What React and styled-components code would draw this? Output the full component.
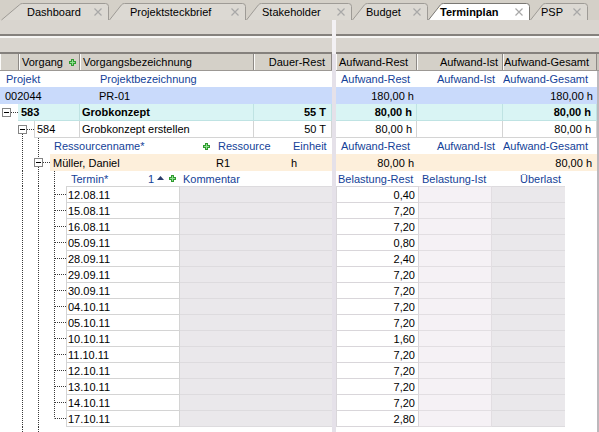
import React from 'react';
import styled, { createGlobalStyle } from 'styled-components';

const FONT = '"Liberation Sans", Arial, sans-serif';
const BLUE = '#143f98';
const C = {
  bar: '#d4d0c8',
  strip: '#d9d5cf',
  blueRow: '#c9dafb',
  cyan: '#d9f4f4',
  cyanLine: '#bfe3e3',
  beige: '#fdefdb',
  grid: '#d4d4d4',
  shade: '#eae8eb',
  shadeLine: '#dddbde',
  pink: '#f5f1f5',
  pinkLine: '#e2dee2',
};

const GlobalStyle = createGlobalStyle`
  html, body { margin: 0; padding: 0; background: #ffffff; }
  body { font-family: ${FONT}; font-size: 11px; color: #000; }
`;

const Screen = styled.div`
  width: 599px;
  height: 432px;
  overflow: hidden;
  display: flex;
  flex-direction: column;
  background: ${C.bar};
  font-family: ${FONT};
  font-size: 11px;
`;

/* ---------- tabs ---------- */
const TabBar = styled.div`
  flex: none;
  height: 20px;
  display: flex;
  align-items: flex-end;
  padding-left: 1px;
  background: ${C.bar};
`;
const Tab = styled.div`
  position: relative;
  flex: none;
  width: ${p => p.$w}px;
  height: 18px;
  box-sizing: border-box;
  display: flex;
  align-items: center;
  padding: 1px 7px 0 ${p => p.$pl}px;
  font-weight: ${p => (p.$active ? 700 : 400)};
  color: #000;
`;
const TabShape = styled.svg`
  position: absolute;
  left: 0;
  top: 0;
  overflow: visible;
`;
const TabLabel = styled.span`
  position: relative;
  white-space: nowrap;
`;
const TabClose = styled.svg`
  position: relative;
  margin-left: auto;
  flex: none;
`;

function TabItem({ label, w, pl, active, slant = 13 }) {
  const d = `M0.5 18 L${slant - 0.5} 2.8 Q${slant + 0.6} 1.5 ${slant + 2.5} 1.5 H${w - 3.5} Q${w - 0.5} 1.5 ${w - 0.5} 4.5 V18`;
  return (
    <Tab $w={w} $pl={pl} $active={active}>
      <TabShape width={w} height={18}>
        <path d={d} fill={active ? '#ffffff' : '#dcd9d3'} stroke={active ? '#7a7874' : '#9e9b96'} />
      </TabShape>
      <TabLabel>{label}</TabLabel>
      <TabClose width="8" height="8" viewBox="0 0 8 8">
        <path d="M0.5 0.5 L7.5 7.5 M7.5 0.5 L0.5 7.5" stroke="#a8a8a8" strokeWidth="1.2" />
      </TabClose>
    </Tab>
  );
}

/* ---------- panes ---------- */
const Workspace = styled.div`
  flex: 1;
  min-height: 0;
  display: flex;
`;
const Pane = styled.div`
  flex: ${p => (p.$w ? `0 0 ${p.$w}px` : '1 1 0')};
  min-width: 0;
  display: flex;
  flex-direction: column;
`;
const Splitter = styled.div`
  flex: 0 0 4px;
  background: linear-gradient(#f3f1f4 0 34px, #e5e1e9 34px);
`;
const ToolStrip = styled.div`
  flex: none;
  height: 14px;
  background: ${C.strip};
  border-bottom: 2px solid #85817d;
  ${p => p.$lower && 'border-top: 2px solid #f7f6f4;'}
`;
const HeadRow = styled.div`
  flex: none;
  display: flex;
  height: 17px;
  box-sizing: border-box;
  border-bottom: 1px solid #9c9894;
  background: ${C.bar};
`;
const HeadCell = styled.div`
  flex: 0 0 ${p => p.$w}px;
  box-sizing: border-box;
  border-left: 1px solid #fbfaf8;
  border-right: 1px solid #8d8985;
  display: flex;
  align-items: center;
  justify-content: ${p => p.$justify || 'flex-start'};
  padding: 0 ${p => p.$pr || 0}px 0 ${p => p.$pl || 0}px;
  white-space: nowrap;
  overflow: hidden;
`;
const HeadFill = styled.div`
  flex: 1;
  background: #c8c4bc;
`;
const Body = styled.div`
  flex: 1;
  min-height: 0;
  display: flex;
  flex-direction: column;
  background: #ffffff;
  overflow: hidden;
  ${p => p.$edge && 'border-right: 2px solid #bcb8bc;'}
`;
const Row = styled.div`
  flex: none;
  display: flex;
  height: ${p => p.$h}px;
  background: ${p => p.$bg || 'transparent'};
`;
const Cell = styled.div`
  ${p => (p.$w ? `flex: 0 0 ${p.$w}px;` : 'flex: 1 1 0;')}
  min-width: 0;
  box-sizing: border-box;
  height: 100%;
  display: flex;
  align-items: center;
  justify-content: ${p => p.$justify || 'flex-start'};
  padding: 0 ${p => p.$pr || 0}px 0 ${p => p.$pl || 0}px;
  background: ${p => p.$bg || 'transparent'};
  color: ${p => (p.$blue ? BLUE : '#000')};
  font-weight: ${p => (p.$bold ? 700 : 400)};
  white-space: nowrap;
  overflow: hidden;
  border-style: solid;
  border-color: ${p => p.$lc || 'transparent'};
  border-width: ${p => `${p.$bt ? 1 : 0}px ${p.$br ? 1 : 0}px ${p.$bb ? 1 : 0}px ${p.$bl ? 1 : 0}px`};
`;
const SortGroup = styled.span`
  display: flex;
  align-items: center;
  color: ${BLUE};
`;
const SortArrow = styled.svg`
  margin: 0 5px 2px 3px;
`;

/* ---------- drawings ---------- */
const PlusIcon = () => (
  <svg width="7" height="7" viewBox="0 0 7 7" style={{ flex: 'none' }}>
    <rect x="2" y="0" width="3" height="7" fill="#2f9a2f" />
    <rect x="0" y="2" width="7" height="3" fill="#2f9a2f" />
    <rect x="3" y="1" width="1" height="5" fill="#8fe08f" />
    <rect x="1" y="3" width="5" height="1" fill="#8fe08f" />
  </svg>
);

const GutterSvg = styled.svg`
  flex: none;
  display: block;
`;
const dot = { stroke: '#3a3a3a', strokeDasharray: '1 1', strokeWidth: 1 };

function Gutter({ w, h, full = [], half = [], box, up, down, branch }) {
  const m = 8.5;
  return (
    <GutterSvg width={w} height={h}>
      {full.map(x => (
        <line key={'f' + x} x1={x + 0.5} y1={0} x2={x + 0.5} y2={h} {...dot} />
      ))}
      {half.map(x => (
        <line key={'h' + x} x1={x + 0.5} y1={0} x2={x + 0.5} y2={m} {...dot} />
      ))}
      {branch && <line x1={branch[0]} y1={m} x2={branch[1] + 1} y2={m} {...dot} />}
      {box !== undefined && up && <line x1={box + 0.5} y1={0} x2={box + 0.5} y2={4} {...dot} />}
      {box !== undefined && down && <line x1={box + 0.5} y1={13} x2={box + 0.5} y2={h} {...dot} />}
      {box !== undefined && (
        <g>
          <rect x={box - 3.5} y={m - 4} width={8} height={8} fill="#fff" stroke="#848484" />
          <line x1={box - 2} y1={m} x2={box + 3} y2={m} stroke="#000" />
        </g>
      )}
    </GutterSvg>
  );
}

/* ---------- data ---------- */
const TABS = [
  { label: 'Dashboard', w: 108, pl: 26, slant: 19 },
  { label: 'Projektsteckbrief', w: 137, pl: 21 },
  { label: 'Stakeholder', w: 106, pl: 16 },
  { label: 'Budget', w: 76, pl: 14 },
  { label: 'Terminplan', w: 102, pl: 12, active: true },
  { label: 'PSP', w: 58, pl: 11 },
];

const DATES = [
  ['12.08.11', '0,40'],
  ['15.08.11', '7,20'],
  ['16.08.11', '7,20'],
  ['05.09.11', '0,80'],
  ['28.09.11', '2,40'],
  ['29.09.11', '7,20'],
  ['30.09.11', '7,20'],
  ['04.10.11', '7,20'],
  ['05.10.11', '7,20'],
  ['10.10.11', '1,60'],
  ['11.10.11', '7,20'],
  ['12.10.11', '7,20'],
  ['13.10.11', '7,20'],
  ['14.10.11', '7,20'],
  ['17.10.11', '2,80'],
];

function AufwandLabels() {
  return (
    <Row $h={16}>
      <Cell $w={81} $pl={5} $blue>Aufwand-Rest</Cell>
      <Cell $w={86} $justify="flex-end" $pr={8} $blue>Aufwand-Ist</Cell>
      <Cell $w={94} $blue>Aufwand-Gesamt</Cell>
    </Row>
  );
}

function LeftPane() {
  const last = DATES.length - 1;
  return (
    <Pane $w={332}>
      <ToolStrip />
      <ToolStrip $lower />
      <HeadRow>
        <HeadCell $w={19} />
        <HeadCell $w={61} $pl={2} $pr={3} $justify="space-between">
          Vorgang <PlusIcon />
        </HeadCell>
        <HeadCell $w={174} $pl={2}>Vorgangsbezeichnung</HeadCell>
        <HeadCell $w={78} $pr={6} $justify="flex-end">Dauer-Rest</HeadCell>
      </HeadRow>
      <Body>
        <Row $h={16}>
          <Cell $w={98} $pl={6} $blue>Projekt</Cell>
          <Cell $pl={2} $blue>Projektbezeichnung</Cell>
        </Row>
        <Row $h={17} $bg={C.blueRow}>
          <Cell $w={98} $pl={5}>002044</Cell>
          <Cell $pl={1}>PR-01</Cell>
        </Row>
        <Row $h={17}>
          <Gutter w={18} h={17} box={6} branch={[11, 17]} />
          <Cell $w={62} $pl={3} $bold $bg={C.cyan} $lc={C.cyanLine} $br $bb>583</Cell>
          <Cell $w={174} $pl={2} $bold $bg={C.cyan} $lc={C.cyanLine} $br $bb>Grobkonzept</Cell>
          <Cell $w={78} $pr={5} $justify="flex-end" $bold $bg={C.cyan} $lc={C.cyanLine} $br $bb>55 T</Cell>
        </Row>
        <Row $h={17}>
          <Gutter w={34} h={17} box={22} down branch={[27, 33]} />
          <Cell $w={46} $pl={2} $lc={C.grid} $bl $br $bb>584</Cell>
          <Cell $w={174} $pl={2} $lc={C.grid} $br $bb>Grobkonzept erstellen</Cell>
          <Cell $w={78} $pr={5} $justify="flex-end" $lc={C.grid} $br $bb>50 T</Cell>
        </Row>
        <Row $h={16}>
          <Gutter w={50} h={16} full={[22, 38]} />
          <Cell $w={163} $pl={4} $pr={3} $justify="space-between" $blue>
            Ressourcenname* <PlusIcon />
          </Cell>
          <Cell $w={75} $pl={5} $blue>Ressource</Cell>
          <Cell $w={44} $pl={5} $blue>Einheit</Cell>
        </Row>
        <Row $h={17}>
          <Gutter w={50} h={17} full={[22]} box={38} up down branch={[43, 49]} />
          <Cell $w={163} $pl={3} $bg={C.beige}>Müller, Daniel</Cell>
          <Cell $w={75} $pl={3} $bg={C.beige}>R1</Cell>
          <Cell $w={44} $pl={3} $bg={C.beige}>h</Cell>
        </Row>
        <Row $h={15}>
          <Gutter w={66} h={15} full={[22, 38, 54]} />
          <Cell $w={114} $pl={5} $pr={4} $justify="space-between" $blue>
            Termin*
            <SortGroup>
              1
              <SortArrow width="7" height="4" viewBox="0 0 7 4">
                <polygon points="0,4 3.5,0 7,4" fill="#2b3c6b" />
              </SortArrow>
              <PlusIcon />
            </SortGroup>
          </Cell>
          <Cell $pl={3} $blue>Kommentar</Cell>
        </Row>
        {DATES.map(([date], i) => (
          <Row $h={i === last ? 17 : 16} key={date}>
            <Gutter
              w={66}
              h={i === last ? 17 : 16}
              full={i === last ? [22, 38] : [22, 38, 54]}
              half={i === last ? [54] : []}
              branch={[55, 65]}
            />
            <Cell $w={114} $pl={1} $lc={C.grid} $bt $bl $br $bb={i === last}>{date}</Cell>
            <Cell $bg={C.shade} $lc={C.shadeLine} $bt $bb={i === last} />
          </Row>
        ))}
        <Row $h={8}>
          <Gutter w={66} h={8} full={[22, 38]} />
        </Row>
      </Body>
    </Pane>
  );
}

function RightPane() {
  const last = DATES.length - 1;
  return (
    <Pane>
      <ToolStrip />
      <ToolStrip $lower />
      <HeadRow>
        <HeadCell $w={81} $pl={2}>Aufwand-Rest</HeadCell>
        <HeadCell $w={86} $pr={4} $justify="flex-end">Aufwand-Ist</HeadCell>
        <HeadCell $w={94}>Aufwand-Gesamt</HeadCell>
        <HeadFill />
      </HeadRow>
      <Body $edge>
        <AufwandLabels />
        <Row $h={17} $bg={C.blueRow}>
          <Cell $w={81} $pr={3} $justify="flex-end">180,00 h</Cell>
          <Cell $w={86} />
          <Cell $w={94} $pr={4} $justify="flex-end">180,00 h</Cell>
        </Row>
        <Row $h={17}>
          <Cell $w={81} $pr={4} $justify="flex-end" $bold $bg={C.cyan} $lc={C.cyanLine} $br $bb>80,00 h</Cell>
          <Cell $w={86} $bg={C.cyan} $lc={C.cyanLine} $br $bb />
          <Cell $w={94} $pr={5} $justify="flex-end" $bold $bg={C.cyan} $lc={C.cyanLine} $br $bb>80,00 h</Cell>
        </Row>
        <Row $h={17}>
          <Cell $w={81} $pr={4} $justify="flex-end" $lc={C.grid} $br $bb>80,00 h</Cell>
          <Cell $w={86} $lc={C.grid} $br $bb />
          <Cell $w={94} $pr={5} $justify="flex-end" $lc={C.grid} $br $bb>80,00 h</Cell>
        </Row>
        <AufwandLabels />
        <Row $h={17} $bg={C.beige}>
          <Cell $w={81} $pr={3} $justify="flex-end">80,00 h</Cell>
          <Cell $w={86} />
          <Cell $w={94} $pr={5} $justify="flex-end">80,00 h</Cell>
        </Row>
        <Row $h={15}>
          <Cell $w={83} $pl={2} $blue>Belastung-Rest</Cell>
          <Cell $w={73} $pl={3} $blue>Belastung-Ist</Cell>
          <Cell $w={73} $pr={4} $justify="flex-end" $blue>Überlast</Cell>
        </Row>
        {DATES.map(([date, value], i) => (
          <Row $h={i === last ? 17 : 16} key={date}>
            <Cell $w={83} $pr={3} $justify="flex-end" $lc="#d9d6da" $bt $bl $br $bb={i === last}>{value}</Cell>
            <Cell $w={73} $bg={C.pink} $lc={C.pinkLine} $bt $br $bb={i === last} />
            <Cell $w={73} $bg={C.shade} $lc={C.shadeLine} $bt $bb={i === last} />
          </Row>
        ))}
      </Body>
    </Pane>
  );
}

export default function App() {
  return (
    <>
      <GlobalStyle />
      <Screen>
        <TabBar>
          {TABS.map(t => (
            <TabItem key={t.label} {...t} />
          ))}
        </TabBar>
        <Workspace>
          <LeftPane />
          <Splitter />
          <RightPane />
        </Workspace>
      </Screen>
    </>
  );
}
